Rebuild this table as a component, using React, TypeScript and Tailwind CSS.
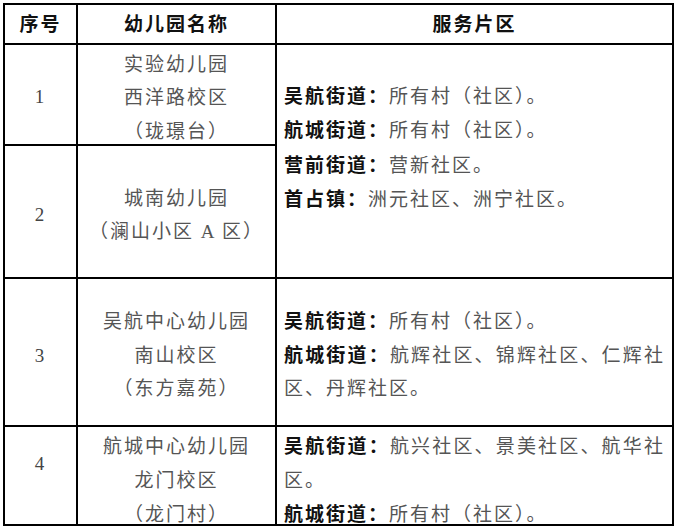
const font = "font-['Liberation_Serif','Noto_Sans_CJK_SC',serif]";

function Label({ children }: { children: React.ReactNode }) {
  return <span className="font-bold text-[#111]">{children}</span>;
}

function NameCell({ lines, pad = "pt-[7px]" }: { lines: string[]; pad?: string }) {
  return (
    <div className={`bg-white flex flex-col items-center justify-center text-center text-[#555] ${pad}`}>
      {lines.map((l) => (
        <div key={l} className="leading-[33.5px]">{l}</div>
      ))}
    </div>
  );
}

function NumCell({ n, pad = "pt-[7px]" }: { n: string; pad?: string }) {
  return (
    <div className={`bg-white flex items-center justify-center text-[#444] ${pad}`}>{n}</div>
  );
}

export default function App() {
  return (
    <div className="bg-white w-[678px] h-[531px] pt-[3px] pl-[3px]">
      <div
        className={`${font} text-[19px] tracking-[2px] w-fit grid grid-cols-[71px_197px_395px] grid-rows-[38px_99px_131px_146px_97px] gap-[2px] p-[2px] bg-black`}
      >
        <div className="bg-white flex items-center justify-center font-bold text-[#111] pt-[2px]">序号</div>
        <div className="bg-white flex items-center justify-center font-bold text-[#111] pt-[2px]">幼儿园名称</div>
        <div className="bg-white flex items-center justify-center font-bold text-[#111] pt-[2px]">服务片区</div>

        <NumCell n="1" pad="pt-[5px]" />
        <NameCell lines={["实验幼儿园", "西洋路校区", "（珑璟台）"]} />
        <div className="row-span-2 bg-white pt-[35px] pl-[7px] pr-[7px] text-justify leading-[33.5px] text-[#555]">
          <div><Label>吴航街道：</Label>所有村（社区）。</div>
          <div><Label>航城街道：</Label>所有村（社区）。</div>
          <div className="pt-[2px]"><Label>营前街道：</Label>营新社区。</div>
          <div><Label>首占镇：</Label>洲元社区、洲宁社区。</div>
        </div>

        <NumCell n="2" />
        <NameCell lines={["城南幼儿园", "（澜山小区 A 区）"]} />

        <NumCell n="3" pad="pt-[9px]" />
        <NameCell lines={["吴航中心幼儿园", "南山校区", "（东方嘉苑）"]} />
        <div className="bg-white flex flex-col justify-center pl-[7px] pr-[7px] pt-[7px] text-justify leading-[33.5px] text-[#555]">
          <div><Label>吴航街道：</Label>所有村（社区）。</div>
          <div><Label>航城街道：</Label>航辉社区、锦辉社区、仁辉社区、丹辉社区。</div>
        </div>

        <NumCell n="4" pad="pb-[23px]" />
        <div className="bg-white flex flex-col items-center justify-center text-center text-[#555] pt-[10px]">
          <div className="leading-[34px]">航城中心幼儿园</div>
          <div className="leading-[34px]">龙门校区</div>
          <div className="leading-[34px]">（龙门村）</div>
        </div>
        <div className="bg-white flex flex-col justify-center pl-[7px] pr-[7px] text-justify leading-[34px] text-[#555] pt-[10px]">
          <div><Label>吴航街道：</Label>航兴社区、景美社区、航华社区。</div>
          <div><Label>航城街道：</Label>所有村（社区）。</div>
        </div>
      </div>
    </div>
  );
}
